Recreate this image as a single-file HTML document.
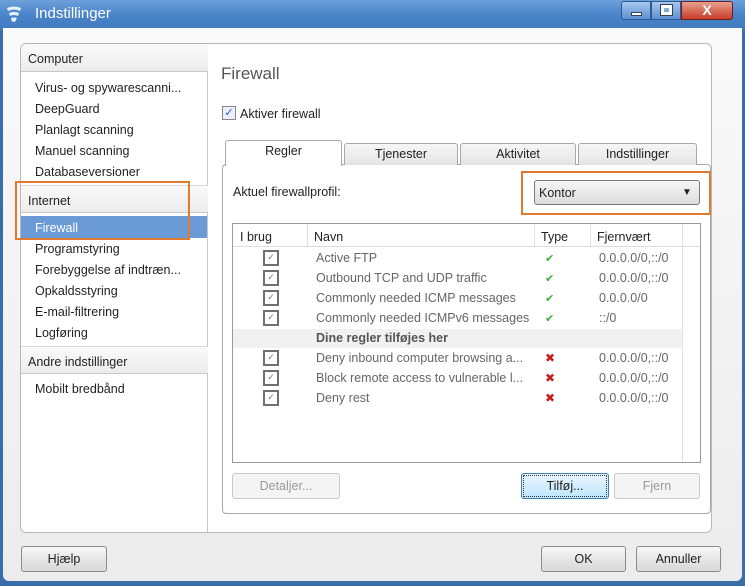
<!DOCTYPE html>
<html><head><meta charset="utf-8"><style>
*{box-sizing:border-box;margin:0;padding:0}
body{width:745px;height:586px;overflow:hidden;font-family:"Liberation Sans","DejaVu Sans",sans-serif;font-size:12.5px;color:#222;background:#3b6ea8;position:relative}
.a{position:absolute}
#title{left:0;top:0;width:745px;height:30px;background:linear-gradient(#6ea0dc,#4a84c8 50%,#3f79c0);color:#fff;font-size:15px}
#client{left:3px;top:28px;width:739px;height:553px;background:linear-gradient(#fafafa,#ececec);border-radius:0 0 6px 6px}
#panel{left:20px;top:43px;width:692px;height:490px;background:#fff;border:1px solid #b8b8b8;border-radius:6px}
.hdr{background:linear-gradient(#fafafa,#ececec);border-bottom:1px solid #c8c8c8;border-top:1px solid #d8d8d8;height:28px;padding:8px 0 0 7px;width:187px;left:21px}
.it{left:35px}
.btn{border:1px solid #8a8a8a;border-radius:3px;background:linear-gradient(#f8f8f8,#e6e6e6 50%,#d8d8d8);text-align:center;line-height:25px;height:26px}
.dis{border-color:#c8c8c8;color:#999;background:#f4f4f4}
.tab{border:1px solid #a8a8a8;border-bottom:none;border-radius:3px 3px 0 0;background:linear-gradient(#f6f6f6,#e4e4e4);text-align:center;height:22px;line-height:20px;top:143px}
.cb{width:16px;height:16px;border:2px solid #707070;background:#fff;font-size:9px;color:#777;text-align:center;line-height:11px;left:263px}
.nm{left:316px;color:#666}
.ip{left:599px;color:#666;font-size:12.5px}
.ok{left:545px;color:#3bb03b;font-size:11px}
.x{left:545px;color:#c02020;font-weight:bold;font-size:12px}
.or{border:2px solid #e07a30}
</style></head><body>
<div id="title" class="a">
 <svg class="a" style="left:6px;top:6px" width="16" height="18" viewBox="0 0 16 18"><path d="M1 2 Q8 -1 15 2 L14 5 Q8 2 2 5Z M3 7 Q8 5 13 7 L12 10 Q8 8 4 10Z M5 12 Q8 11 11 12 L9 16 Q7 15 6 16Z" fill="#e8f0fa"/></svg>
 <div class="a" style="left:35px;top:5px">Indstillinger</div>
 <div class="a" style="left:621px;top:1px;width:30px;height:19px;border:1px solid #2d5a90;border-radius:3px 0 0 3px;background:linear-gradient(#a8c8ee,#5d8fd0)"><div class="a" style="left:9px;top:10px;width:11px;height:4px;background:#fff;border:1px solid #345"></div></div>
 <div class="a" style="left:651px;top:1px;width:30px;height:19px;border:1px solid #2d5a90;background:linear-gradient(#a8c8ee,#5d8fd0)"><div class="a" style="left:9px;top:3px;width:11px;height:10px;border:3px solid #fff;outline:1px solid #345"></div></div>
 <div class="a" style="left:681px;top:1px;width:52px;height:19px;border:1px solid #6a2020;border-radius:0 3px 3px 0;background:linear-gradient(#e8a090,#c83c28);color:#fff;font-weight:bold;text-align:center;line-height:17px;font-size:14px">X</div>
</div>
<div id="client" class="a"></div>
<div id="panel" class="a"></div>
<div class="a" style="left:207px;top:44px;width:1px;height:488px;background:#c8c8c8"></div>
<div class="a hdr" style="top:44px;border-top:none;border-radius:5px 0 0 0">Computer</div>
<div class="a it" style="top:81px">Virus- og spywarescanni...</div>
<div class="a it" style="top:102px">DeepGuard</div>
<div class="a it" style="top:123px">Planlagt scanning</div>
<div class="a it" style="top:144px">Manuel scanning</div>
<div class="a it" style="top:165px">Databaseversioner</div>
<div class="a hdr" style="top:185px">Internet</div>
<div class="a" style="left:21px;top:216px;width:186px;height:22px;background:#6b9bd6"></div>
<div class="a it" style="top:221px;color:#fff">Firewall</div>
<div class="a it" style="top:242px">Programstyring</div>
<div class="a it" style="top:263px">Forebyggelse af indtræn...</div>
<div class="a it" style="top:284px">Opkaldsstyring</div>
<div class="a it" style="top:305px">E-mail-filtrering</div>
<div class="a it" style="top:326px">Logføring</div>
<div class="a hdr" style="top:346px">Andre indstillinger</div>
<div class="a it" style="top:382px">Mobilt bredbånd</div>
<div class="a or" style="left:15px;top:181px;width:175px;height:59px"></div>

<div class="a" style="left:221px;top:64px;font-size:17px;color:#555">Firewall</div>
<div class="a" style="left:222px;top:106px;width:14px;height:14px;border:1px solid #888;background:#eef;color:#2a5ea8;font-size:11px;line-height:12px;text-align:center;font-weight:bold">✓</div>
<div class="a" style="left:240px;top:107px">Aktiver firewall</div>

<div class="a" style="left:222px;top:164px;width:489px;height:350px;border:1px solid #a8a8a8;border-radius:4px;background:#fff"></div>
<div class="a tab" style="left:344px;width:114px">Tjenester</div>
<div class="a tab" style="left:460px;width:116px">Aktivitet</div>
<div class="a tab" style="left:578px;width:119px">Indstillinger</div>
<div class="a tab" style="left:225px;top:140px;width:117px;height:26px;background:#fff">Regler</div>
<div class="a" style="left:233px;top:185px">Aktuel firewallprofil:</div>
<div class="a" style="left:534px;top:180px;width:166px;height:25px;border:1px solid #7a7a7a;border-radius:3px;background:linear-gradient(#f6f6f6,#dcdcdc)"><span class="a" style="left:4px;top:5px">Kontor</span><span class="a" style="left:147px;top:6px;font-size:10px">▼</span></div>
<div class="a or" style="left:521px;top:171px;width:190px;height:44px"></div>

<div class="a" style="left:232px;top:223px;width:469px;height:240px;border:1px solid #9a9a9a;background:#fff"></div>
<div class="a" style="left:233px;top:224px;width:467px;height:23px;border-bottom:1px solid #ddd"></div>
<div class="a" style="left:307px;top:224px;width:1px;height:22px;background:#e0e0e0"></div>
<div class="a" style="left:534px;top:224px;width:1px;height:22px;background:#e0e0e0"></div>
<div class="a" style="left:590px;top:224px;width:1px;height:22px;background:#e0e0e0"></div>
<div class="a" style="left:682px;top:224px;width:1px;height:238px;background:#e0e0e0"></div>
<div class="a" style="left:240px;top:230px">I brug</div>
<div class="a" style="left:314px;top:230px">Navn</div>
<div class="a" style="left:541px;top:230px">Type</div>
<div class="a" style="left:597px;top:230px">Fjernvært</div>

<div class="a cb" style="top:250px">✓</div><div class="a nm" style="top:251px">Active FTP</div><div class="a ok" style="top:252px">✔</div><div class="a ip" style="top:251px">0.0.0.0/0,::/0</div>
<div class="a cb" style="top:270px">✓</div><div class="a nm" style="top:271px">Outbound TCP and UDP traffic</div><div class="a ok" style="top:272px">✔</div><div class="a ip" style="top:271px">0.0.0.0/0,::/0</div>
<div class="a cb" style="top:290px">✓</div><div class="a nm" style="top:291px">Commonly needed ICMP messages</div><div class="a ok" style="top:292px">✔</div><div class="a ip" style="top:291px">0.0.0.0/0</div>
<div class="a cb" style="top:310px">✓</div><div class="a nm" style="top:311px">Commonly needed ICMPv6 messages</div><div class="a ok" style="top:312px">✔</div><div class="a ip" style="top:311px">::/0</div>
<div class="a" style="left:233px;top:329px;width:449px;height:19px;background:#f1f1f1"></div>
<div class="a" style="left:316px;top:331px;font-weight:bold;color:#555">Dine regler tilføjes her</div>
<div class="a cb" style="top:350px">✓</div><div class="a nm" style="top:351px">Deny inbound computer browsing a...</div><div class="a x" style="top:351px">✖</div><div class="a ip" style="top:351px">0.0.0.0/0,::/0</div>
<div class="a cb" style="top:370px">✓</div><div class="a nm" style="top:371px">Block remote access to vulnerable l...</div><div class="a x" style="top:371px">✖</div><div class="a ip" style="top:371px">0.0.0.0/0,::/0</div>
<div class="a cb" style="top:390px">✓</div><div class="a nm" style="top:391px">Deny rest</div><div class="a x" style="top:391px">✖</div><div class="a ip" style="top:391px">0.0.0.0/0,::/0</div>

<div class="a btn dis" style="left:232px;top:473px;width:108px">Detaljer...</div>
<div class="a btn" style="left:521px;top:473px;width:88px;border-color:#3c7fb1;background:linear-gradient(#eaf6fd,#bee6fd);outline:1px dotted #333;outline-offset:-3px">Tilføj...</div>
<div class="a btn dis" style="left:614px;top:473px;width:86px">Fjern</div>

<div class="a btn" style="left:21px;top:546px;width:86px">Hjælp</div>
<div class="a btn" style="left:541px;top:546px;width:85px">OK</div>
<div class="a btn" style="left:636px;top:546px;width:85px">Annuller</div>
</body></html>
